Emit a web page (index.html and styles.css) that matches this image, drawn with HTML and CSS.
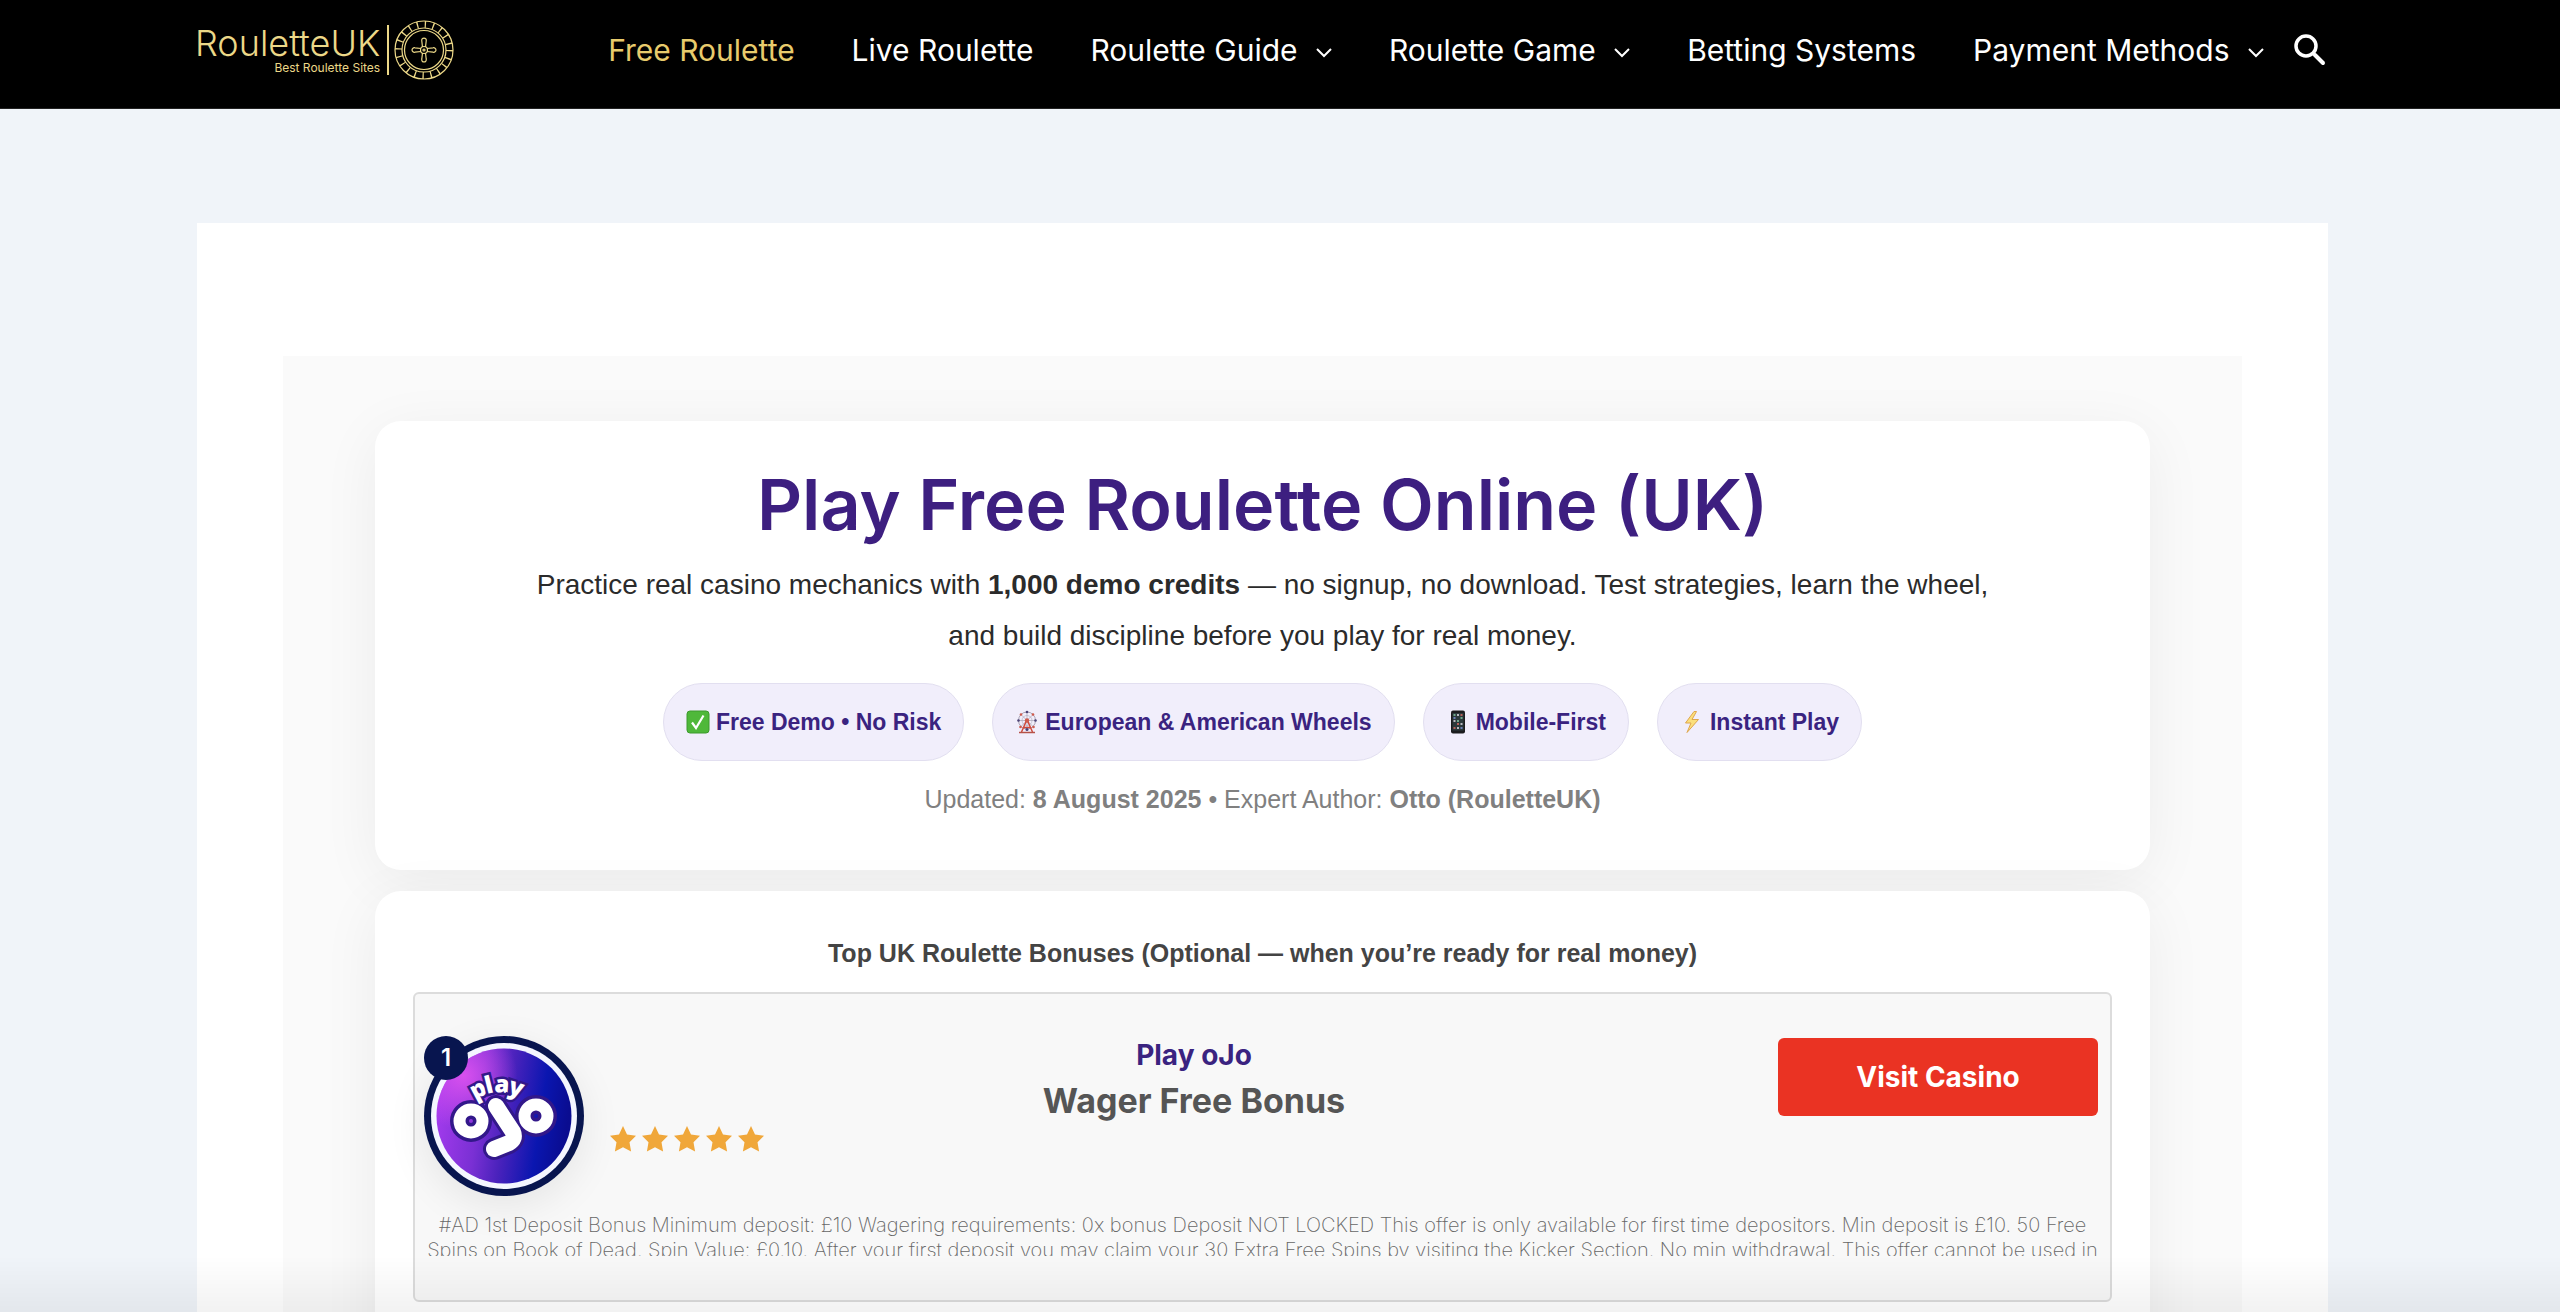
FILE: index.html
```
<!DOCTYPE html>
<html lang="en-GB">
<head>
    <meta charset="UTF-8">
    <meta name="viewport" content="width=device-width, initial-scale=1.0">
    <title>Play Free Roulette Online (UK)</title>
    <link rel="stylesheet" href="styles.css">
</head>
<body>
    <header class="site-header">
        <a class="logo" href="#" aria-label="RouletteUK home">
            <span class="logo-text">
                <span class="logo-name">RouletteUK</span>
                <span class="logo-tagline">Best Roulette Sites</span>
            </span>
            <svg class="logo-wheel" viewBox="0 0 60 60" fill="none" stroke="currentColor" stroke-width="1.2">
                <circle cx="30" cy="30" r="29"/>
                <circle cx="30" cy="30" r="22"/>
                <circle cx="30" cy="30" r="19.5"/>
                <circle cx="30" cy="30" r="25.5" stroke-width="7" stroke-dasharray="1.3 6.71"/>
                <circle cx="30" cy="30" r="3.5"/>
                <circle cx="30" cy="30" r="1"/>
                <path d="M28.500 27l-.7-6a2.300 2.300 0 1 1 4.400 0l-.7 6M28.500 33l-.7 6a2.300 2.300 0 1 0 4.400 0l-.7-6M27 28.500l-6-.7a2.300 2.300 0 1 0 0 4.400l6-.7M33 28.500l6-.7a2.300 2.300 0 1 1 0 4.400l-6-.7"/>
            </svg>
        </a>
        <nav class="main-nav">
            <a class="active" href="#">Free Roulette</a>
            <a href="#">Live Roulette</a>
            <a href="#">Roulette Guide <svg class="chevron" viewBox="0 0 16 10"><path d="M1 1l7 7 7-7"/></svg></a>
            <a href="#">Roulette Game <svg class="chevron" viewBox="0 0 16 10"><path d="M1 1l7 7 7-7"/></svg></a>
            <a href="#">Betting Systems</a>
            <a href="#">Payment Methods <svg class="chevron" viewBox="0 0 16 10"><path d="M1 1l7 7 7-7"/></svg></a>
        </nav>
        <button class="search-button" type="button" aria-label="Search">
            <svg viewBox="0 0 32 32" fill="none" stroke="currentColor">
                <circle cx="12" cy="12" r="10" stroke-width="3.500"/>
                <path d="M19 19l2 2" stroke-width="3"/>
                <path d="M21 21l8 8" stroke-width="4" stroke-linecap="round"/>
            </svg>
        </button>
    </header>

    <main class="page">
        <div class="content">
            <section class="card hero">
                <h1>Play Free Roulette Online (UK)</h1>
                <p class="lead">Practice real casino mechanics with <strong>1,000 demo credits</strong> — no signup, no download. Test strategies, learn the wheel, and build discipline before you play for real money.</p>
                <ul class="pills">
                    <li>
                        <svg class="pill-icon" viewBox="0 0 24 24">
                            <rect x="1" y="1" width="22" height="22" rx="3" fill="#4fb83a" stroke="#3c9a2c"/>
                            <path d="M6 12.500l4 5.500L17.500 5.500" fill="none" stroke="#fff" stroke-width="2.200"/>
                        </svg>
                        Free Demo • No Risk
                    </li>
                    <li>
                        <svg class="pill-icon" viewBox="0 0 24 24" fill="none">
                            <circle cx="12" cy="10.500" r="8.500" stroke="#a9a3b5"/>
                            <circle cx="12" cy="10.500" r="5" stroke="#b9b4c6" stroke-width=".7"/>
                            <path d="M12 2v17M3.500 10.500h17M6 4.500l12 12M18 4.500l-12 12" stroke="#a9a3b5" stroke-width=".7"/>
                            <path d="M12 9.500L6.500 22M12 9.500L17.500 22M8.500 17.500h7" stroke="#cf4a3c" stroke-width="1.500"/>
                            <path d="M4 22.500h16" stroke="#b55249" stroke-width="1.500"/>
                            <g fill="#4c4376">
                                <circle cx="12" cy="2" r="1.300"/><circle cx="12" cy="19.500" r="1.500"/>
                                <circle cx="3.500" cy="10.500" r="1.300"/><circle cx="20.500" cy="10.500" r="1.300"/>
                            </g>
                            <g fill="#cf5a4c">
                                <circle cx="6" cy="4.500" r="1.300"/><circle cx="18" cy="4.500" r="1.300"/>
                                <circle cx="5.500" cy="17" r="1.300"/><circle cx="18.500" cy="17" r="1.300"/>
                                <circle cx="12" cy="10.500" r="2.200"/>
                            </g>
                        </svg>
                        European &amp; American Wheels
                    </li>
                    <li>
                        <svg class="pill-icon" viewBox="0 0 24 24">
                            <rect x="5" y="0.500" width="14" height="23" rx="2" fill="#1c1c1e"/>
                            <rect x="6.500" y="3" width="11" height="17.500" fill="#2c3a3c"/>
                            <g fill="#6fa58a"><rect x="7.500" y="4" width="2" height="2"/><rect x="14.500" y="7" width="2" height="2"/><rect x="11" y="10" width="2" height="2"/></g>
                            <g fill="#b9b9c0"><rect x="11" y="4" width="2" height="2"/><rect x="7.500" y="10" width="2" height="2"/><rect x="14.500" y="13" width="2" height="2"/><rect x="11" y="17" width="2" height="2"/></g>
                            <g fill="#b9605a"><rect x="14.500" y="4" width="2" height="2"/><rect x="11" y="13" width="2" height="2"/><rect x="7.500" y="17" width="2" height="2"/></g>
                            <g fill="#6b7fb5"><rect x="7.500" y="7" width="2" height="2"/><rect x="14.500" y="17" width="2" height="2"/></g>
                        </svg>
                        Mobile-First
                    </li>
                    <li>
                        <svg class="pill-icon" viewBox="0 0 24 24">
                            <path d="M14 1.500L5.500 13h5.500L7 22.500 18.500 9.500h-6.500L16.500 1.500z" fill="#fbdf7c" stroke="#dfa64c" stroke-linejoin="round"/>
                        </svg>
                        Instant Play
                    </li>
                </ul>
                <p class="meta">Updated: <strong>8 August 2025</strong> • Expert Author: <strong>Otto (RouletteUK)</strong></p>
            </section>

            <section class="card bonuses">
                <h2>Top UK Roulette Bonuses (Optional — when you’re ready for real money)</h2>
                <article class="offer">
                    <div class="offer-row">
                        <div class="offer-brand">
                            <div class="offer-logo">
                                <svg viewBox="0 0 160 160" role="img" aria-label="Play OJO">
                                    <defs>
                                        <linearGradient id="ojo" x1="0" y1="0.200" x2="1" y2="0.350">
                                            <stop offset="0" stop-color="#a83cf0"/>
                                            <stop offset="0.350" stop-color="#7a30d4"/>
                                            <stop offset="0.550" stop-color="#4a22bc"/>
                                            <stop offset="0.800" stop-color="#0a16b0"/>
                                            <stop offset="1" stop-color="#0a0c90"/>
                                        </linearGradient>
                                        <radialGradient id="pink" cx="0.200" cy="0.200" r="0.400">
                                            <stop offset="0" stop-color="#d850ee"/>
                                            <stop offset="1" stop-color="#d850ee" stop-opacity="0"/>
                                        </radialGradient>
                                    </defs>
                                    <circle cx="80" cy="80" r="80" fill="#08154f"/>
                                    <circle cx="80" cy="80" r="73" fill="#f4f6ff"/>
                                    <circle cx="80" cy="80" r="67.500" fill="url(#ojo)"/>
                                    <circle cx="80" cy="80" r="67.500" fill="url(#pink)"/>
                                    <g class="ojo-outline">
                                        <circle cx="47" cy="85" r="11.500"/>
                                        <circle cx="112" cy="80" r="11.500"/>
                                        <path d="M72 70L89 96Q92 103 85 107L70 113"/>
                                    </g>
                                    <g class="ojo-play">
                                        <text transform="translate(51 64) rotate(-28)">p</text>
                                        <text transform="translate(63 58) rotate(-14)">l</text>
                                        <text transform="translate(70 56) rotate(4)">a</text>
                                        <text transform="translate(83 57) rotate(18)">y</text>
                                    </g>
                                    <g class="ojo-letters">
                                        <circle cx="47" cy="85" r="11.500"/>
                                        <circle cx="112" cy="80" r="11.500"/>
                                        <path d="M72 70L89 96Q92 103 85 107L70 113"/>
                                    </g>
                                </svg>
                                <span class="rank">1</span>
                            </div>
                            <div class="stars" role="img" aria-label="5 out of 5 stars">
                                <svg viewBox="0 0 26 26"><path d="M13 0l4 8.500 9 1.300-6.500 6.400L21.100 25.500 13 21.200 4.900 25.500l1.600-9.300L0 9.800l9-1.300z"/></svg>
                                <svg viewBox="0 0 26 26"><path d="M13 0l4 8.500 9 1.300-6.500 6.400L21.100 25.500 13 21.200 4.900 25.500l1.600-9.300L0 9.800l9-1.300z"/></svg>
                                <svg viewBox="0 0 26 26"><path d="M13 0l4 8.500 9 1.300-6.500 6.400L21.100 25.500 13 21.200 4.900 25.500l1.600-9.300L0 9.800l9-1.300z"/></svg>
                                <svg viewBox="0 0 26 26"><path d="M13 0l4 8.500 9 1.300-6.500 6.400L21.100 25.500 13 21.200 4.900 25.500l1.600-9.300L0 9.800l9-1.300z"/></svg>
                                <svg viewBox="0 0 26 26"><path d="M13 0l4 8.500 9 1.300-6.500 6.400L21.100 25.500 13 21.200 4.900 25.500l1.600-9.300L0 9.800l9-1.300z"/></svg>
                            </div>
                        </div>
                        <div class="offer-info">
                            <a class="offer-name" href="#">Play oJo</a>
                            <p class="offer-bonus">Wager Free Bonus</p>
                        </div>
                        <a class="visit-button" href="#">Visit Casino</a>
                    </div>
                    <p class="terms">#AD 1st Deposit Bonus Minimum deposit: £10 Wagering requirements: 0x bonus Deposit NOT LOCKED This offer is only available for first time depositors. Min deposit is £10. 50 Free<br>Spins on Book of Dead. Spin Value: £0.10. After your first deposit you may claim your 30 Extra Free Spins by visiting the Kicker Section. No min withdrawal. This offer cannot be used in</p>
                </article>
            </section>
        </div>
    </main>
    <div class="bottom-fade"></div>
</body>
</html>
```
FILE: styles.css
```
* {
    box-sizing: border-box;
}

body {
    margin: 0;
    height: 100vh;
    overflow: hidden;
    background-color: #f0f4f9;
    color: #2b2b2b;
    font-family: "Liberation Sans", Arial, sans-serif;
}

a {
    text-decoration: none;
}

h1, h2, p, ul {
    margin: 0;
    padding: 0;
}

/* Header */
.site-header {
    display: flex;
    align-items: center;
    height: 109px;
    padding: 0 234px 8px 195px;
    background-color: #000;
    border-bottom: 1px solid #222;
}

.logo {
    display: flex;
    align-items: center;
    color: #ecd888;
}

.logo-text {
    display: flex;
    flex-direction: column;
    align-items: flex-end;
    height: 50px;
    padding-right: 7px;
    border-right: 2px solid #ecd888;
    font-family: Inter, sans-serif;
}

.logo-name {
    font-size: 36px;
    line-height: 36px;
    font-weight: 300;
}

.logo-tagline {
    font-size: 12px;
    line-height: 14px;
}

.logo-wheel {
    width: 60px;
    height: 60px;
    margin-left: 5px;
}

.main-nav {
    flex: 1;
    display: flex;
    justify-content: space-between;
    margin-left: 154px;
    font-family: Inter, sans-serif;
    font-size: 30px;
}

.main-nav a {
    color: #fff;
    white-space: nowrap;
}

.main-nav .active {
    color: #e8cb6c;
}

.chevron {
    width: 16px;
    height: 10px;
    margin-left: 10px;
    vertical-align: 3px;
    fill: none;
    stroke: currentColor;
    stroke-width: 2;
}

.search-button {
    width: 32px;
    height: 32px;
    margin-left: 30px;
    padding: 0;
    border: none;
    background: none;
    color: #fff;
}

.search-button svg {
    display: block;
}

/* Page */
.page {
    margin: 114px 232px 0 197px;
    padding: 133px 86px 0;
    background-color: #fff;
}

.content {
    padding: 65px 92px;
    background-color: #fafafa;
}

.card {
    background-color: #fff;
    border-radius: 26px;
    box-shadow: 0 12px 60px rgba(0, 0, 0, 0.06);
    text-align: center;
}

.hero {
    padding: 36px 40px 49px;
    margin-bottom: 21px;
}

h1 {
    color: #3d1f80;
    font-family: Inter, sans-serif;
    font-size: 70px;
    line-height: 96px;
    font-weight: 600;
}

.lead {
    max-width: 1480px;
    margin: 6px auto 22px;
    font-size: 28px;
    line-height: 51px;
}

.pills {
    display: flex;
    justify-content: center;
    gap: 28px;
    list-style: none;
}

.pills li {
    display: flex;
    align-items: center;
    gap: 6px;
    height: 78px;
    padding: 0 22px;
    border: 1px solid #e2dff0;
    border-radius: 39px;
    background-color: #f1eefb;
    color: #3a2380;
    font-size: 23px;
    font-weight: bold;
}

.pill-icon {
    width: 24px;
    height: 24px;
}

.meta {
    margin-top: 16px;
    color: #808080;
    font-size: 25px;
    line-height: 44px;
}

/* Bonuses */
.bonuses {
    padding: 40px 38px 80px;
}

h2 {
    margin-bottom: 17px;
    color: #444;
    font-size: 25px;
    line-height: 44px;
}

.offer {
    padding: 42px 0 44px;
    border: 2px solid #dcdcdc;
    border-radius: 6px;
    background-color: #f8f8f8;
    font-family: Inter, sans-serif;
}

.offer-row {
    display: flex;
    align-items: flex-start;
    padding: 0 12px 0 9px;
}

.offer-brand {
    display: flex;
    align-items: center;
    gap: 26px;
}

.offer-logo {
    position: relative;
    width: 160px;
    height: 160px;
    border-radius: 50%;
    box-shadow: 0 10px 40px rgba(0, 0, 0, 0.08);
}

.ojo-outline,
.ojo-letters {
    fill: none;
    stroke-linecap: round;
    stroke-linejoin: round;
}

.ojo-outline {
    stroke: #32188a;
    stroke-width: 19;
}

.ojo-outline path {
    stroke-width: 22;
}

.ojo-letters {
    stroke: #fff;
    stroke-width: 12;
}

.ojo-letters path {
    stroke-width: 16;
}

.ojo-play {
    fill: #fff;
    stroke: #32188a;
    stroke-width: 5;
    paint-order: stroke;
    font-family: "Open Sans", sans-serif;
    font-size: 24px;
    font-weight: 800;
}

.rank {
    position: absolute;
    top: 0;
    left: 0;
    width: 44px;
    height: 44px;
    border-radius: 50%;
    background-color: #08154f;
    color: #fff;
    font-size: 24px;
    line-height: 44px;
    font-weight: 600;
}

.stars {
    display: flex;
    gap: 6px;
    padding-top: 46px;
}

.stars svg {
    width: 26px;
    height: 26px;
    fill: #f0a73a;
}

.offer-info {
    flex: 1;
    padding-right: 154px;
}

.offer-name {
    color: #3a2380;
    font-size: 28px;
    line-height: 38px;
    font-weight: 700;
}

.offer-bonus {
    color: #555;
    font-size: 34px;
    line-height: 54px;
    font-weight: 700;
}

.visit-button {
    width: 320px;
    margin-top: 2px;
    border-radius: 6px;
    background-color: #ea3323;
    color: #fff;
    font-size: 28px;
    line-height: 78px;
    font-weight: 700;
}

.terms {
    height: 43px;
    margin-top: 17px;
    overflow: hidden;
    color: #666;
    font-size: 20px;
    line-height: 25px;
    font-weight: 200;
    white-space: nowrap;
}

/* Soft shade along the bottom edge of the window */
.bottom-fade {
    position: fixed;
    left: 0;
    right: 0;
    bottom: 0;
    height: 56px;
    background: linear-gradient(rgba(0, 0, 0, 0), rgba(0, 0, 0, 0.05));
    pointer-events: none;
}
```
